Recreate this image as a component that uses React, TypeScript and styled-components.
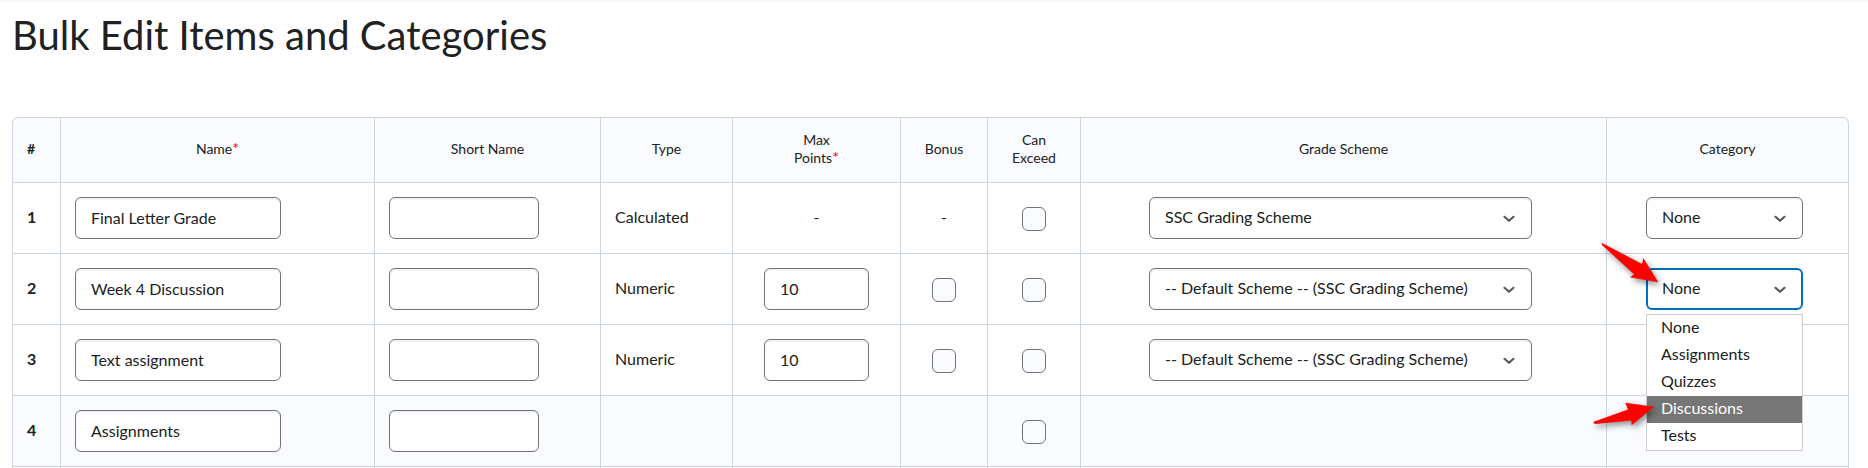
import React from 'react';
import styled, { createGlobalStyle, css } from 'styled-components';

const color = {
  text: '#202122',
  line: '#cdd5dc',
  shade: '#f9fbff',
  field: '#6e7477',
  focus: '#006fbf',
  required: '#ff0000',
};

const GlobalStyle = createGlobalStyle`
  *, *::before, *::after { box-sizing: border-box; }
  body {
    margin: 0;
    background: #ffffff;
    color: ${color.text};
    font-family: Lato, "Liberation Sans", sans-serif;
    font-size: 16px;
    line-height: 24px;
  }
`;

const Page = styled.main`
  border-top: 3px solid #f9f9f9;
  padding: 8px 19px 0 12px;
`;

const Title = styled.h1`
  margin: 0 0 58px;
  font-size: 40px;
  line-height: 48px;
  font-weight: 400;
`;

const Grid = styled.table`
  width: 100%;
  min-width: 1700px;
  table-layout: fixed;
  border-collapse: separate;
  border-spacing: 0;
  border: solid ${color.line};
  border-width: 1px 0 0 1px;
  border-radius: 6px 6px 0 0;
`;

const Col = styled.col<{ $w?: number }>`
  ${p => p.$w && css`width: ${p.$w}px;`}
`;

const HeadCell = styled.th<{ $start?: boolean }>`
  height: 65px;
  padding: 0 14px 2px;
  border: solid ${color.line};
  border-width: 0 1px 1px 0;
  background: ${color.shade};
  font-size: 14px;
  line-height: 18px;
  font-weight: ${p => (p.$start ? 700 : 400)};
  text-align: ${p => (p.$start ? 'left' : 'center')};
  &:first-child { border-top-left-radius: 6px; }
  &:last-child { border-top-right-radius: 6px; }
`;

const Required = styled.span`
  color: ${color.required};
  font-size: 16px;
  line-height: 16px;
`;

const Row = styled.tr<{ $shaded?: boolean }>`
  background: ${p => (p.$shaded ? color.shade : '#ffffff')};
`;

const cellStyle = css`
  padding: 14px;
  border: solid ${color.line};
  border-width: 0 1px 1px 0;
  vertical-align: middle;
`;

const RowHead = styled.th`
  ${cellStyle}
  padding-bottom: 16px;
  text-align: left;
  font-weight: 700;
`;

const Cell = styled.td<{ $center?: boolean; $text?: boolean }>`
  ${cellStyle}
  ${p => p.$text && css`padding-bottom: 16px;`}
  text-align: ${p => (p.$center ? 'center' : 'left')};
`;

const TailCell = styled.td`
  height: 1px;
  padding: 0;
  border-right: 1px solid ${color.line};
`;

const fieldStyle = css`
  height: 42px;
  border: 1px solid ${color.field};
  border-radius: 6px;
  background: #ffffff;
  box-shadow: inset 0 2px 0 #f1f3f5;
  color: ${color.text};
  font: inherit;
`;

const TextField = styled.input<{ $w: number }>`
  ${fieldStyle}
  display: inline-block;
  vertical-align: top;
  width: ${p => p.$w}px;
  padding: 0 15px 2px;
`;

const Check = styled.input`
  appearance: none;
  display: block;
  width: 24px;
  height: 24px;
  margin: 2px auto 0;
  border: 1px solid ${color.field};
  border-radius: 6px;
  background: ${color.shade};
`;

const Picker = styled.div<{ $w: number }>`
  position: relative;
  width: ${p => p.$w}px;
  margin: 0 auto;
  left: -3px;
`;

const Select = styled.select<{ $open?: boolean }>`
  ${fieldStyle}
  appearance: none;
  display: block;
  width: 100%;
  padding: 0 40px 2px 15px;
  outline: none;
  ${p => p.$open && css`
    padding: 0 39px 2px 14px;
    border: 2px solid ${color.focus};
    box-shadow: none;
  `}
`;

const Chevron = styled.svg`
  position: absolute;
  top: 18px;
  right: 17px;
  width: 12px;
  height: 8px;
  pointer-events: none;
`;

const Menu = styled.ul`
  position: absolute;
  z-index: 1;
  top: 46px;
  left: 0;
  right: 0;
  margin: 0;
  padding: 0;
  border: 1px solid #cccccc;
  background: #ffffff;
  list-style: none;
  text-align: left;
`;

const Option = styled.li<{ $active?: boolean }>`
  padding: 0 14px 3px;
  line-height: 24px;
  ${p => p.$active && css`
    background: #767676;
    color: #ffffff;
  `}
`;

const Pointer = styled.svg<{ $top: number; $left: number }>`
  position: absolute;
  z-index: 2;
  top: ${p => p.$top}px;
  left: ${p => p.$left}px;
  overflow: visible;
  filter: drop-shadow(2px 3px 3px rgba(0, 0, 0, 0.45));
  pointer-events: none;
`;

type DropDownProps = {
  label: string;
  width: number;
  value: string;
  options: string[];
  open?: boolean;
  children?: React.ReactNode;
};

function DropDown({ label, width, value, options, open, children }: DropDownProps) {
  return (
    <Picker $w={width}>
      <Select aria-label={label} defaultValue={value} $open={open}>
        {options.map(o => <option key={o}>{o}</option>)}
      </Select>
      <Chevron viewBox="0 0 12 8" aria-hidden="true">
        <path d="M1.5 1.8 6 5.8 10.5 1.8" fill="none" stroke="#565a5c" strokeWidth="2.2" strokeLinecap="round" strokeLinejoin="round" />
      </Chevron>
      {children}
    </Picker>
  );
}

const CATEGORIES = ['None', 'Assignments', 'Quizzes', 'Discussions', 'Tests'];
const SSC = 'SSC Grading Scheme';
const DEFAULT_SCHEME = '-- Default Scheme -- (SSC Grading Scheme)';

type Item = {
  name: string;
  type?: string;
  points?: string;
  bonus?: boolean;
  scheme?: string;
  category?: string;
  open?: boolean;
};

const ITEMS: Item[] = [
  { name: 'Final Letter Grade', type: 'Calculated', scheme: SSC, category: 'None' },
  { name: 'Week 4 Discussion', type: 'Numeric', points: '10', bonus: true, scheme: DEFAULT_SCHEME, category: 'None', open: true },
  { name: 'Text assignment', type: 'Numeric', points: '10', bonus: true, scheme: DEFAULT_SCHEME, category: 'None' },
  { name: 'Assignments' },
];

const COLUMNS = [48, 314, 226, 132, 168, 87, 93, undefined, 242];

function ItemRow({ item, index }: { item: Item; index: number }) {
  const dash = item.type ? '-' : null;
  return (
    <Row $shaded={!item.type}>
      <RowHead scope="row">{index}</RowHead>
      <Cell><TextField $w={206} aria-label={`Name ${index}`} defaultValue={item.name} /></Cell>
      <Cell><TextField $w={150} aria-label={`Short name ${index}`} /></Cell>
      <Cell $text>{item.type}</Cell>
      <Cell $center $text={!item.points}>
        {item.points ? <TextField $w={105} aria-label={`Max points ${index}`} defaultValue={item.points} /> : dash}
      </Cell>
      <Cell $center $text={!item.bonus}>
        {item.bonus ? <Check type="checkbox" aria-label={`Bonus ${index}`} /> : dash}
      </Cell>
      <Cell $center><Check type="checkbox" aria-label={`Can exceed ${index}`} /></Cell>
      <Cell $center>
        {item.scheme && (
          <DropDown label={`Grade scheme ${index}`} width={383} value={item.scheme} options={[SSC, DEFAULT_SCHEME]} />
        )}
      </Cell>
      <Cell $center>
        {item.category && (
          <DropDown label={`Category ${index}`} width={157} value={item.category} options={CATEGORIES} open={item.open}>
            {item.open && (
              <>
                <Menu role="listbox" aria-label="Categories">
                  {CATEGORIES.map(c => (
                    <Option key={c} role="option" aria-selected={c === 'Discussions'} $active={c === 'Discussions'}>{c}</Option>
                  ))}
                </Menu>
                <Pointer $top={-25} $left={-45} width="58" height="40" aria-hidden="true">
                  <path d="M0.5 0.5Q1 0 2 0.5L41 21 42.3 15 57.3 39.3 29 34.3 33 31.3 1 2Z" fill="#ff0000" />
                </Pointer>
                <Pointer $top={133} $left={-53} width="61" height="26" aria-hidden="true">
                  <path d="M0.5 22Q0 21 1.5 20.5L35 8.5 32.3 1.7 61 5.7 38.7 24.3 38.3 19.5 2 23Z" fill="#ff0000" />
                </Pointer>
              </>
            )}
          </DropDown>
        )}
      </Cell>
    </Row>
  );
}

export default function App() {
  return (
    <>
      <GlobalStyle />
      <Page>
        <Title>Bulk Edit Items and Categories</Title>
        <Grid>
          <colgroup>{COLUMNS.map((w, i) => <Col key={i} $w={w} />)}</colgroup>
          <thead>
            <tr>
              <HeadCell scope="col" $start>#</HeadCell>
              <HeadCell scope="col">Name<Required>*</Required></HeadCell>
              <HeadCell scope="col">Short Name</HeadCell>
              <HeadCell scope="col">Type</HeadCell>
              <HeadCell scope="col">Max<br />Points<Required>*</Required></HeadCell>
              <HeadCell scope="col">Bonus</HeadCell>
              <HeadCell scope="col">Can<br />Exceed</HeadCell>
              <HeadCell scope="col">Grade Scheme</HeadCell>
              <HeadCell scope="col">Category</HeadCell>
            </tr>
          </thead>
          <tbody>
            {ITEMS.map((item, i) => <ItemRow key={item.name} item={item} index={i + 1} />)}
            <tr aria-hidden="true">{COLUMNS.map((_, i) => <TailCell key={i} />)}</tr>
          </tbody>
        </Grid>
      </Page>
    </>
  );
}
